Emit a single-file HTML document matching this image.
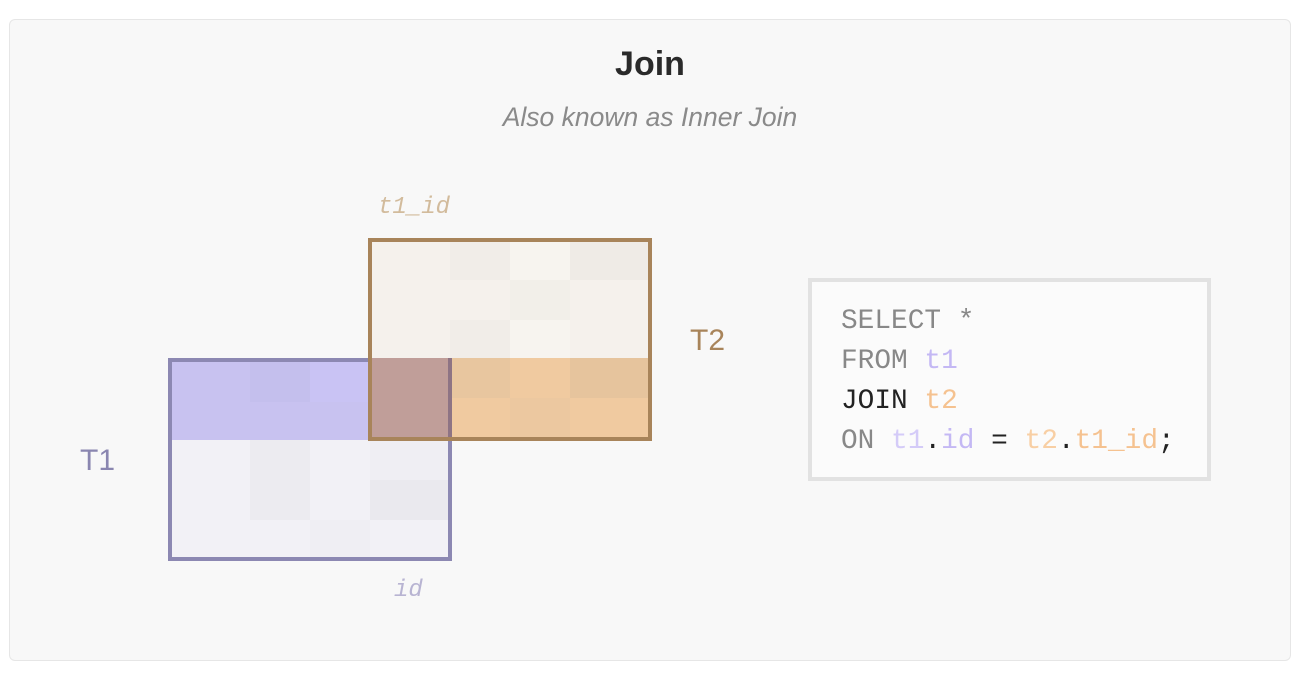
<!DOCTYPE html>
<html><head><style>
body{margin:0;width:1316px;height:674px;background:#fff;position:relative;font-family:"Liberation Sans",sans-serif;overflow:hidden}
.card{position:absolute;left:9px;top:19px;width:1280px;height:640px;border:1px solid #e6e6e6;border-radius:6px;background:#f8f8f8}
.a{position:absolute}
.c{position:absolute}
.code{position:absolute;left:808px;top:278px;width:395px;height:195px;border:4px solid #e2e2e2;background:#fbfbfb;font-family:"Liberation Mono",monospace;font-size:27.8px;line-height:32px;color:#888}
.code div{position:absolute;left:29px;white-space:pre}
</style></head><body>
<div class="card"></div>
<div class="a" style="left:0;width:1300px;top:45px;text-align:center;font-weight:bold;font-size:34px;color:#2a2a2a">Join</div>
<div class="a" style="left:0;width:1300px;top:102px;text-align:center;font-style:italic;font-size:26.5px;color:#8a8a8a">Also known as Inner Join</div>
<div class="a" style="left:378px;top:194px;font-family:'Liberation Mono',monospace;font-style:italic;font-size:24px;color:#d2bb9c">t1_id</div>
<div class="a" style="left:394px;top:577px;font-family:'Liberation Mono',monospace;font-style:italic;font-size:24px;color:#b8b4d2">id</div>
<div class="a" style="left:690px;top:324px;font-size:30px;color:#a8845a">T2</div>
<div class="a" style="left:80px;top:444px;font-size:30px;color:#8a86b0">T1</div>

<div class="c" style="left:172px;top:362px;width:276px;height:78px;background:#c8c2f0"></div>
<div class="c" style="left:250px;top:362px;width:60px;height:40px;background:#c4bfed"></div>
<div class="c" style="left:310px;top:362px;width:60px;height:40px;background:#c9c3f4"></div>
<div class="c" style="left:172px;top:440px;width:276px;height:117px;background:#f2f1f6"></div>
<div class="c" style="left:250px;top:440px;width:60px;height:80px;background:#ecebf0"></div>
<div class="c" style="left:370px;top:440px;width:78px;height:40px;background:#efeef3"></div>
<div class="c" style="left:370px;top:480px;width:78px;height:40px;background:#eae9ee"></div>
<div class="c" style="left:310px;top:520px;width:60px;height:37px;background:#efeef3"></div>
<div class="c" style="left:168px;top:358px;width:276px;height:195px;border:4px solid #8c88b2"></div>

<div class="c" style="left:372px;top:242px;width:276px;height:116px;background:#f5f1ec"></div>
<div class="c" style="left:450px;top:242px;width:60px;height:38px;background:#f1ede8"></div>
<div class="c" style="left:510px;top:242px;width:60px;height:38px;background:#f7f4ef"></div>
<div class="c" style="left:570px;top:242px;width:78px;height:38px;background:#efebe6"></div>
<div class="c" style="left:510px;top:280px;width:60px;height:40px;background:#f2efe9"></div>
<div class="c" style="left:450px;top:320px;width:60px;height:38px;background:#f1ede8"></div>
<div class="c" style="left:510px;top:320px;width:60px;height:38px;background:#f7f4ef"></div>
<div class="c" style="left:372px;top:358px;width:276px;height:79px;background:#f0caa0"></div>
<div class="c" style="left:450px;top:358px;width:60px;height:40px;background:#e8c69f"></div>
<div class="c" style="left:570px;top:358px;width:78px;height:40px;background:#e6c49d"></div>
<div class="c" style="left:510px;top:398px;width:60px;height:39px;background:#ecc8a0"></div>
<div class="c" style="left:372px;top:358px;width:78px;height:79px;background:#c09e99"></div>
<div class="c" style="left:448px;top:358px;width:4px;height:79px;background:#8e7484"></div>
<div class="c" style="left:368px;top:238px;width:276px;height:195px;border:4px solid #a8845a"></div>

<div class="code">
<div style="top:24px">SELECT *</div>
<div style="top:64px">FROM <span style="color:#c4b8f4">t1</span></div>
<div style="top:104px;color:#222">JOIN <span style="color:#f5c290">t2</span></div>
<div style="top:144px">ON <span style="color:#d4cbf8">t1</span><span style="color:#222">.</span><span style="color:#c4b8f4">id</span> <span style="color:#222">=</span> <span style="color:#f8cfa4">t2</span><span style="color:#222">.</span><span style="color:#f5c290">t1_id</span><span style="color:#222">;</span></div>
</div>
</body></html>
